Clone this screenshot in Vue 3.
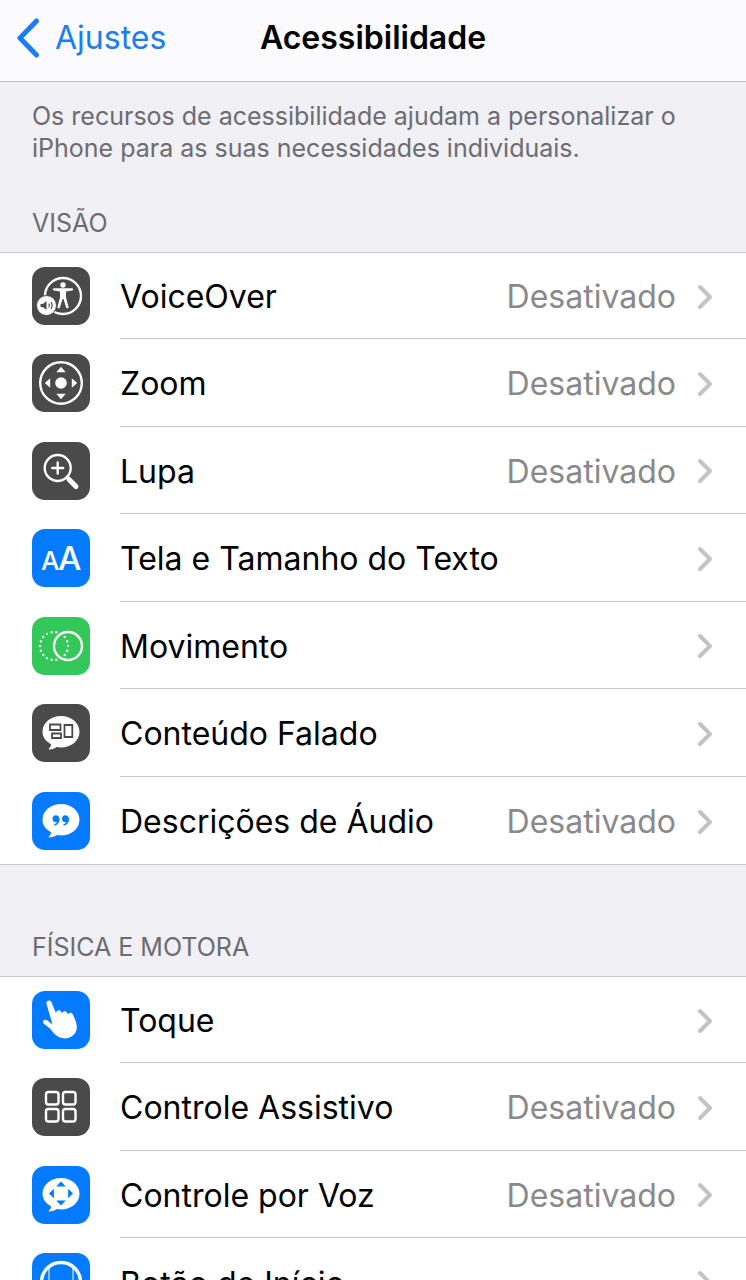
<script setup>
const sections = [
  {
    id: 'visao',
    title: 'Visão',
    items: [
      { label: 'VoiceOver', value: 'Desativado', icon: 'voiceover', tone: 'dark' },
      { label: 'Zoom', value: 'Desativado', icon: 'zoom', tone: 'dark' },
      { label: 'Lupa', value: 'Desativado', icon: 'magnifier', tone: 'dark' },
      { label: 'Tela e Tamanho do Texto', icon: 'text', tone: 'blue' },
      { label: 'Movimento', icon: 'motion', tone: 'green' },
      { label: 'Conteúdo Falado', icon: 'spoken', tone: 'dark' },
      { label: 'Descrições de Áudio', value: 'Desativado', icon: 'audio', tone: 'blue' },
    ],
  },
  {
    id: 'fisica',
    title: 'Física e Motora',
    items: [
      { label: 'Toque', icon: 'touch', tone: 'blue' },
      { label: 'Controle Assistivo', value: 'Desativado', icon: 'switch', tone: 'dark' },
      { label: 'Controle por Voz', value: 'Desativado', icon: 'voice', tone: 'blue' },
      { label: 'Botão de Início', icon: 'home', tone: 'blue' },
    ],
  },
]
const bubble =
  'M29 12c10.400 0 18.500 7 18.500 15.800S39.400 43.500 29 43.500c-1.500 0-2.900-.1-4.200-.4-2.200 1.500-4.700 2.400-7.300 2.500-.8 0-1-.7-.5-1.200 1.400-1.400 2-2.600 2-4.200C13.700 37.500 10.500 33 10.500 27.800 10.500 19 18.600 12 29 12z'
</script>

<template>
  <div class="screen">
    <header class="bar">
      <a class="back" href="#ajustes">
        <svg class="back-arrow" viewBox="0 0 24 40" aria-hidden="true">
          <path d="M20.500 3 4 20l16.500 17" />
        </svg>
        <span>Ajustes</span>
      </a>
      <h1>Acessibilidade</h1>
    </header>

    <main class="content">
      <p class="intro">
        Os recursos de acessibilidade ajudam a personalizar o iPhone para as suas necessidades individuais.
      </p>

      <section v-for="section in sections" :key="section.id" class="group" :aria-labelledby="section.id">
        <h2 :id="section.id">{{ section.title }}</h2>
        <ul>
          <li v-for="item in section.items" :key="item.label">
            <button type="button" class="row">
              <svg class="icon" :class="item.tone" viewBox="0 0 58 58" aria-hidden="true">
                <g v-if="item.icon === 'voiceover'">
                  <circle class="line" cx="31" cy="29" r="18" />
                  <circle class="fill" cx="31" cy="18" r="2.700" />
                  <path class="fill" d="M22 21.200h18c1.500 0 1.500 2.200 0 2.400l-6 .8v6.200l2.500 9.200c.4 1.600-1.900 2.200-2.400.7L31.500 32h-1l-2.600 8.500c-.5 1.500-2.800.9-2.400-.7L28 30.600v-6.200l-6-.8c-1.500-.2-1.500-2.400 0-2.400z" />
                  <circle class="fill ring" cx="14.500" cy="38.500" r="10" />
                  <path class="ink" d="M8.500 36.900h2.300l3.700-2.900v9l-3.700-2.900H8.500z" />
                  <path class="ink-line fine" d="M16.800 36.700c.8 1.200.8 2.400 0 3.600M19 35.200c1.500 2.200 1.500 4.400 0 6.600" />
                </g>
                <g v-else-if="item.icon === 'zoom'">
                  <circle class="line" cx="29" cy="29" r="20.800" />
                  <circle class="fill" cx="29" cy="29" r="5.800" />
                  <path class="fill" d="M29 12.800l4.700 5.400h-9.400zM29 45.200l4.700-5.400h-9.400zM12.800 29l5.400-4.700v9.400zM45.200 29l-5.400-4.700v9.400z" />
                </g>
                <g v-else-if="item.icon === 'magnifier'">
                  <circle class="line" cx="25.700" cy="26" r="13" />
                  <path class="line" d="M25.700 20.500v11M20.200 26h11M34.500 35l3 3" />
                  <path class="line handle" d="M37 37.500l7 7" />
                </g>
                <g v-else-if="item.icon === 'text'" class="letters">
                  <text x="9" y="41" font-size="26">A</text>
                  <text x="26" y="41" font-size="33">A</text>
                </g>
                <g v-else-if="item.icon === 'motion'">
                  <circle class="line dots" cx="22" cy="29" r="14" pathLength="72" />
                  <circle class="line" cx="36" cy="29" r="14" />
                </g>
                <g v-else-if="item.icon === 'spoken'">
                  <path class="fill" :d="bubble" />
                  <path class="ink-line" d="M18 20.500h10.500v5.500H18zM20 29.500h9v4.500h-9zM32.500 21h7.800v12h-7.800z" />
                </g>
                <g v-else-if="item.icon === 'audio'">
                  <path class="fill" :d="bubble" />
                  <path class="ink" d="M23.800 23.200c2.200 0 3.800 1.800 3.800 4.300 0 3-1.900 5.300-4.800 6-.9.200-1.200-.9-.4-1.300 1.300-.6 2.100-1.300 2.500-2.200-2.500.5-4.400-1.100-4.400-3.300 0-2 1.400-3.500 3.300-3.500zM33.200 23.200c2.200 0 3.800 1.800 3.800 4.300 0 3-1.900 5.300-4.800 6-.9.200-1.200-.9-.4-1.300 1.300-.6 2.100-1.300 2.500-2.200-2.500.5-4.400-1.100-4.400-3.300 0-2 1.400-3.500 3.300-3.500z" />
                </g>
                <g v-else-if="item.icon === 'touch'">
                  <path class="fill" d="M14.500 12.700c-.8-3.400 3.900-4.500 5-1.400l4.500 11c.2-3.500 4.300-3.900 5.400-1l.5 1.300c.4-3 4.300-3.300 5.400-.6l.7 1.800c.4-2.600 3.900-2.800 4.900-.2 2.900 6 4.900 11.500 3.400 15.800-2 5.600-7.800 8.500-13 7.900-5.800-.7-9.500-4.300-12.500-9L11.600 32.500c-1.900-2.600 1-5 3.500-3.300l5.400 4.300z" />
                </g>
                <g v-else-if="item.icon === 'switch'">
                  <rect class="line" x="14" y="14" width="12.500" height="12.500" rx="2.500" />
                  <rect class="line" x="31" y="14" width="12.500" height="12.500" rx="2.500" />
                  <rect class="line" x="14" y="31" width="12.500" height="12.500" rx="2.500" />
                  <rect class="line" x="31" y="31" width="12.500" height="12.500" rx="2.500" />
                </g>
                <g v-else-if="item.icon === 'voice'">
                  <path class="fill" :d="bubble" />
                  <path class="ink" d="M29 15.500l4.800 4.900h-9.600zM29 39.500l4.800-4.900h-9.600zM17 27.500l4.900-4.800v9.600zM41 27.500l-4.900-4.800v9.600z" />
                </g>
                <g v-else>
                  <circle class="line thick" cx="29" cy="29" r="19.500" />
                  <path class="line thin" d="M17 58V14M41 58V14" />
                </g>
              </svg>
              <span class="text">
                <span class="label">{{ item.label }}</span>
                <span v-if="item.value" class="value">{{ item.value }}</span>
                <svg class="chevron" viewBox="0 0 16 26" aria-hidden="true">
                  <path d="M3 3 13 13 3 23" />
                </svg>
              </span>
            </button>
          </li>
        </ul>
      </section>
    </main>
  </div>
</template>

<style>
body {
  background: #f0f0f5;
}
</style>

<style scoped>
.screen {
  display: flex;
  flex-direction: column;
  height: 100vh;
  background: #f0f0f5;
  color: #000;
  font-family: Inter, "Liberation Sans", sans-serif;
}
.bar {
  display: grid;
  grid-template-columns: 1fr auto 1fr;
  align-items: center;
  flex: none;
  box-sizing: border-box;
  height: 82px;
  padding: 0 16px 6px;
  border-bottom: 1px solid #bcbcc0;
  background: #fbfbfd;
}
.back {
  display: flex;
  align-items: center;
  gap: 15px;
  color: #1a7df0;
  font-size: 32px;
  text-decoration: none;
}
.back-arrow {
  width: 24px;
  height: 40px;
  fill: none;
  stroke: currentColor;
  stroke-width: 5;
  stroke-linecap: round;
  stroke-linejoin: round;
}
h1 {
  margin: 0;
  font-size: 32px;
  font-weight: 600;
}
.content {
  flex: 1;
  min-height: 0;
  overflow-y: auto;
  scrollbar-width: none;
}
.intro {
  margin: 0;
  padding: 18px 32px 0;
  color: #6c6c72;
  font-size: 25px;
  line-height: 32px;
}
.group h2 {
  margin: 0;
  padding: 43px 32px 13px;
  color: #6c6c72;
  font-size: 25px;
  font-weight: 400;
  line-height: 32px;
  text-transform: uppercase;
}
.group + .group h2 {
  padding-top: 66px;
}
ul {
  margin: 0;
  padding: 0;
  border: solid #c8c8cc;
  border-width: 1px 0;
  background: #fff;
  list-style: none;
}
.row {
  display: flex;
  align-items: stretch;
  gap: 30px;
  width: 100%;
  height: 87px;
  padding: 0 0 0 32px;
  border: 0;
  background: none;
  color: inherit;
  font: inherit;
  font-size: 32px;
  text-align: left;
}
li:nth-child(even) .row {
  height: 88px;
}
li:first-child .row {
  height: 86px;
}
.icon {
  flex: none;
  align-self: center;
  width: 58px;
  height: 58px;
  border-radius: 13px;
  background: var(--tone);
}
.dark {
  --tone: #4a4a4b;
}
.blue {
  --tone: #047bfe;
}
.green {
  --tone: #34c759;
}
.fill,
.letters {
  fill: #fff;
}
.line {
  fill: none;
  stroke: #fff;
  stroke-width: 2.400;
  stroke-linecap: round;
}
.letters {
  font-weight: 500;
}
.handle {
  stroke-width: 5;
}
.thick {
  stroke-width: 3.500;
}
.thin {
  stroke-width: 1;
}
.dots {
  stroke-dasharray: 0 4;
}
.ring {
  stroke: var(--tone);
  stroke-width: 1;
}
.ink {
  fill: var(--tone);
}
.ink-line {
  fill: none;
  stroke: var(--tone);
  stroke-width: 1.800;
}
.fine {
  stroke-width: 1.200;
}
.text {
  display: flex;
  flex: 1;
  align-items: center;
  min-width: 0;
  padding-top: 2px;
  padding-right: 33px;
  border-bottom: 1px solid #c8c8cc;
}
li:last-child .text {
  border-bottom: 0;
}
.label {
  flex: 1;
}
.value {
  color: #89898d;
}
.chevron {
  width: 16px;
  height: 26px;
  margin-left: 21px;
  fill: none;
  stroke: #c3c3c6;
  stroke-width: 4;
  stroke-linecap: round;
  stroke-linejoin: round;
}
</style>
